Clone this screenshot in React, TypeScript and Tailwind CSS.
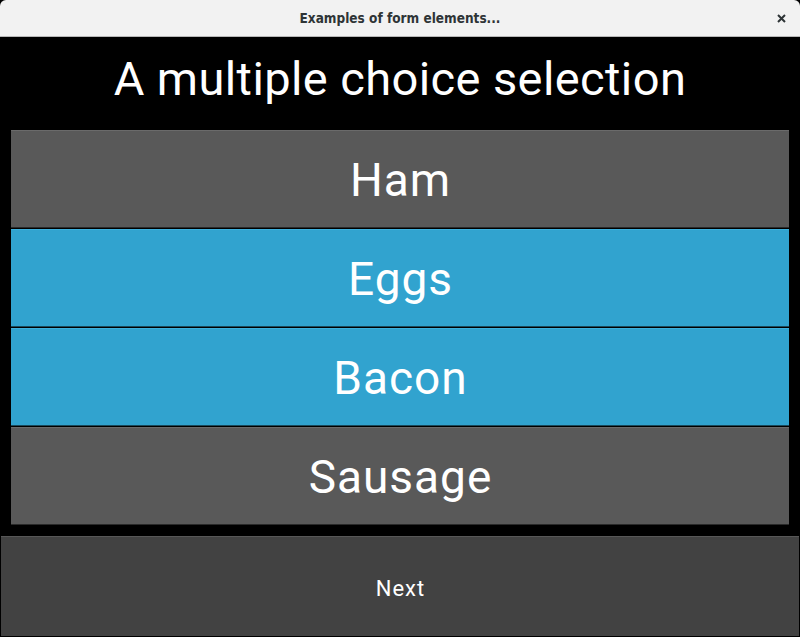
import React, { useState } from 'react';

const options = ['Ham', 'Eggs', 'Bacon', 'Sausage'];

export default function App() {
    const [selected, setSelected] = useState<string[]>(['Eggs', 'Bacon']);

    const toggle = (name: string) => {
        setSelected(prev => prev.includes(name) ? prev.filter(n => n !== name) : [...prev, name]);
    };

    return (
        <div className="w-[800px] h-[637px] flex flex-col bg-black overflow-hidden font-['Roboto',sans-serif]">
            {/* window title bar */}
            <div className="h-[37px] shrink-0 flex items-center justify-center relative bg-[#f2f2f2] border-b border-[#b8b8b8] rounded-t-[6px]">
                <span className="text-[13.5px] font-bold text-[#2e3436] font-['DejaVu_Sans',sans-serif] [font-stretch:condensed]">
                    Examples of form elements...
                </span>
                <svg className="absolute right-[14px] top-[14px]" width="9" height="9" viewBox="0 0 9 9">
                    <path d="M1 1L8 8M8 1L1 8" stroke="#2e3436" strokeWidth="2" />
                </svg>
            </div>

            <div className="h-[93px] shrink-0 flex items-center justify-center pb-[10px]">
                <h1 className="text-white text-[47px] leading-none tracking-[0.4px]">A multiple choice selection</h1>
            </div>

            <div className="flex flex-col gap-[2px] px-[11px]">
                {options.map(name => (
                    <button
                        key={name}
                        onClick={() => toggle(name)}
                        className={
                            selected.includes(name)
                                ? 'h-[97px] flex items-center justify-center bg-[#31a3cf] border-t border-[#3db0dc] shadow-[0_1px_0_#1a4a5c] text-white text-[46px] tracking-[1px] pl-[1px] pt-[2px]'
                                : 'h-[97px] flex items-center justify-center bg-[#595959] border-t border-[#6a6a6a] shadow-[0_1px_0_#2a2a2a] text-white text-[46px] tracking-[1px] pl-[1px] pt-[2px]'
                        }
                    >
                        {name}
                    </button>
                ))}
            </div>

            <div className="flex-1 flex px-[1px] pt-[12px] pb-[1px]">
                <button className="flex-1 flex items-center justify-center bg-[#424242] border-t border-[#575757] text-white text-[22px] tracking-[1px] pt-[4px] pl-[1px]">
                    Next
                </button>
            </div>
        </div>
    );
}
